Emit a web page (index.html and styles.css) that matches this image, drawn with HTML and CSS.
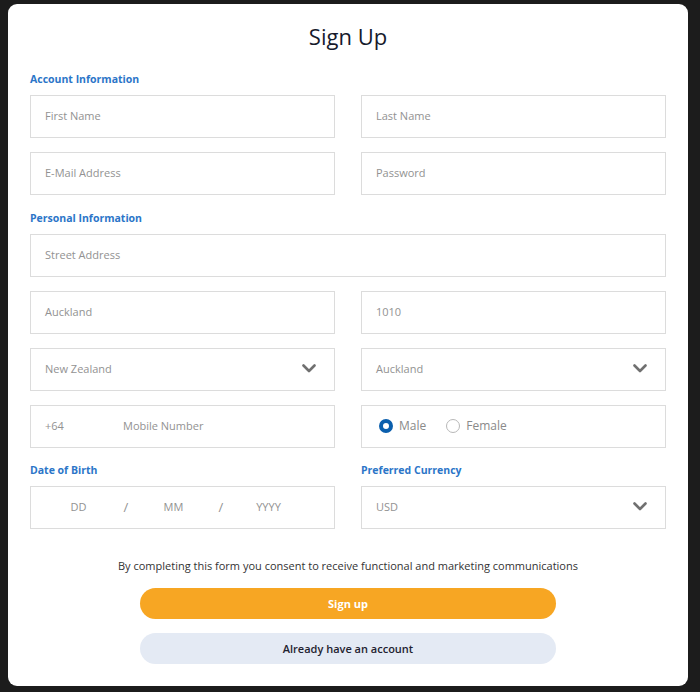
FILE: index.html
```html
<!DOCTYPE html>
<html>
<head>
<meta charset="utf-8">
<link rel="stylesheet" href="styles.css">
</head>
<body>
<div class="card">
  <h1 class="title">Sign Up</h1>

  <div class="label">Account Information</div>
  <div class="grid">
    <div class="field"><span class="ph">First Name</span></div>
    <div class="field"><span class="ph">Last Name</span></div>
    <div class="field"><span class="ph">E-Mail Address</span></div>
    <div class="field"><span class="ph">Password</span></div>
  </div>

  <div class="label gap-top">Personal Information</div>
  <div class="grid">
    <div class="field full"><span class="ph">Street Address</span></div>
    <div class="field"><span class="ph">Auckland</span></div>
    <div class="field"><span class="ph">1010</span></div>
    <div class="field select"><span class="ph">New Zealand</span>
      <svg class="chev" width="14" height="9" viewBox="0 0 14 9"><path d="M1.5 1.5 L7 7 L12.5 1.5" fill="none" stroke="#707070" stroke-width="2.6" stroke-linecap="round" stroke-linejoin="round"/></svg>
    </div>
    <div class="field select"><span class="ph">Auckland</span>
      <svg class="chev" width="14" height="9" viewBox="0 0 14 9"><path d="M1.5 1.5 L7 7 L12.5 1.5" fill="none" stroke="#707070" stroke-width="2.6" stroke-linecap="round" stroke-linejoin="round"/></svg>
    </div>
    <div class="field"><span class="ph code">+64</span><span class="ph">Mobile Number</span></div>
    <div class="field radios">
      <span class="radio on"></span><span class="rlabel">Male</span>
      <span class="radio"></span><span class="rlabel">Female</span>
    </div>
  </div>

  <div class="grid two-labels">
    <div>
      <div class="label">Date of Birth</div>
      <div class="field dob">
        <span class="seg">DD</span><span class="slash">/</span>
        <span class="seg">MM</span><span class="slash">/</span>
        <span class="seg">YYYY</span>
      </div>
    </div>
    <div>
      <div class="label">Preferred Currency</div>
      <div class="field select"><span class="ph">USD</span>
        <svg class="chev" width="14" height="9" viewBox="0 0 14 9"><path d="M1.5 1.5 L7 7 L12.5 1.5" fill="none" stroke="#707070" stroke-width="2.6" stroke-linecap="round" stroke-linejoin="round"/></svg>
      </div>
    </div>
  </div>

  <p class="consent">By completing this form you consent to receive functional and marketing communications</p>
  <div class="buttons">
    <button class="btn primary">Sign up</button>
    <button class="btn secondary">Already have an account</button>
  </div>
</div>
</body>
</html>
```

FILE: styles.css
```css
* { box-sizing: border-box; }
html, body { margin: 0; padding: 0; }
body {
  background: #1c1c1c;
  width: 700px;
  height: 692px;
  overflow: hidden;
  font-family: "Open Sans", "Noto Sans", sans-serif;
}
.card {
  margin: 4px 0 0 8px;
  width: 680px;
  height: 682px;
  background: #ffffff;
  border-radius: 9px;
  padding: 17px 22px 0 22px;
}
.title {
  margin: 0 0 20px 0;
  text-align: center;
  font-size: 22px;
  line-height: 30px;
  font-weight: 400;
  color: #161a2c;
}
.label {
  font-size: 10.5px;
  line-height: 16px;
  font-weight: 700;
  color: #2b75c8;
  margin-bottom: 8px;
}
.gap-top { margin-top: 15px; }
.grid {
  display: grid;
  grid-template-columns: 305px 305px;
  column-gap: 26px;
  row-gap: 14px;
}
.two-labels { margin-top: 14px; }
.full { grid-column: 1 / span 2; }
.field {
  height: 43px;
  border: 1px solid #dcdcdc;
  display: flex;
  align-items: center;
  padding: 0 14px 2px 14px;
  font-size: 11px;
  color: #929292;
}
.ph { color: #929292; }
.code { width: 78px; }
.select { justify-content: space-between; padding-right: 18px; }
.chev { display: block; }
.radios { padding-left: 17px; }
.radio {
  width: 14px;
  height: 14px;
  border-radius: 50%;
  border: 1px solid #b8b8b8;
  background: #fff;
  margin-right: 6px;
}
.radio.on {
  border: 4px solid #0b5fad;
}
.rlabel {
  font-size: 12px;
  color: #8a8a8a;
  margin-right: 20px;
}
.dob { padding: 0 0 2px 0; }
.seg { width: 95px; text-align: center; }
.slash { width: 0; display: flex; justify-content: center; font-size: 13px; }
.consent {
  margin: 29px 0 14px 0;
  text-align: center;
  font-size: 11px;
  line-height: 16px;
  color: #333;
}
.buttons {
  display: flex;
  flex-direction: column;
  align-items: center;
  gap: 14px;
}
.btn {
  width: 416px;
  height: 31px;
  border: none;
  border-radius: 16px;
  font-family: inherit;
  font-size: 11px;
}
.primary { background: #f7a623; color: #fff; font-weight: 700; }
.secondary { background: #e4eaf4; color: #1f2230; font-weight: 600; }
```
